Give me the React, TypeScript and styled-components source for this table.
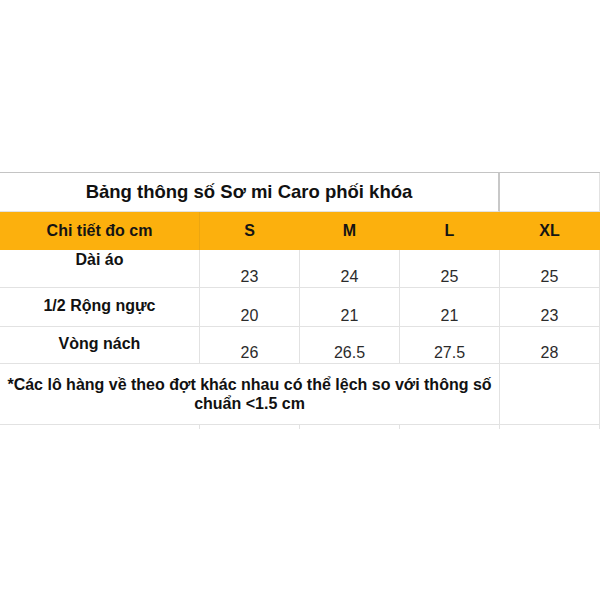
import styled, { createGlobalStyle } from "styled-components";

const GlobalStyle = createGlobalStyle`
  html, body {
    margin: 0;
    padding: 0;
    background: #ffffff;
  }
  body {
    font-family: "Liberation Sans", Arial, sans-serif;
  }
`;

const Page = styled.div`
  width: 601px;
  height: 601px;
  padding-top: 172px;
  box-sizing: border-box;
  overflow: hidden;
`;

const Sheet = styled.div`
  display: grid;
  grid-template-columns: 200px repeat(4, 100px);
  grid-template-rows: 39px 38px 38px 39px 37px 61px 4px;
  width: 600px;
  border-top: 1px solid #c4c4c4;
`;

const TitleCell = styled.div`
  grid-column: 1 / span 4;
  display: flex;
  align-items: center;
  justify-content: center;
  border-right: 2px solid #c8c8c8;
  border-bottom: 1px solid #e2e2e2;
  font-size: 18.5px;
  font-weight: 700;
  color: #111;
  box-sizing: border-box;
`;

const BlankCell = styled.div`
  border-right: 1px solid #e2e2e2;
  border-bottom: 1px solid #e2e2e2;
  box-sizing: border-box;
`;

const TitleSpacer = styled(BlankCell)`
  grid-column: 5;
`;

const HeadCell = styled.div<{ $split?: boolean }>`
  display: flex;
  align-items: center;
  justify-content: center;
  background: #fcb00d;
  border-right: 1px solid ${(p) => (p.$split ? "#eca610" : "#fcb00d")};
  box-sizing: border-box;
  font-size: 16px;
  font-weight: 700;
  color: #141414;
`;

const LabelCell = styled.div<{ $top: number }>`
  display: flex;
  justify-content: center;
  align-items: flex-start;
  padding-top: ${(p) => p.$top}px;
  border-right: 1px solid #e2e2e2;
  border-bottom: 1px solid #e2e2e2;
  box-sizing: border-box;
  font-size: 16px;
  line-height: 18px;
  font-weight: 700;
  color: #111;
`;

const ValueCell = styled.div`
  display: flex;
  justify-content: center;
  align-items: flex-end;
  padding-bottom: 1px;
  border-right: 1px solid #e2e2e2;
  border-bottom: 1px solid #e2e2e2;
  box-sizing: border-box;
  font-size: 16px;
  line-height: 18px;
  color: #2b2b2b;
`;

const NoteCell = styled.div`
  grid-column: 1 / span 4;
  display: flex;
  align-items: center;
  justify-content: center;
  text-align: center;
  padding: 0 3px;
  border-right: 1px solid #e2e2e2;
  border-bottom: 1px solid #e2e2e2;
  box-sizing: border-box;
  font-size: 16px;
  line-height: 19px;
  font-weight: 700;
  color: #111;
`;

const StubCell = styled.div`
  border-right: 1px solid #e2e2e2;
  box-sizing: border-box;
`;

const sizes = ["S", "M", "L", "XL"];

const rows = [
  { label: "Dài áo", top: 1, values: ["23", "24", "25", "25"] },
  { label: "1/2 Rộng ngực", top: 9, values: ["20", "21", "21", "23"] },
  { label: "Vòng nách", top: 8, values: ["26", "26.5", "27.5", "28"] },
];

export default function App() {
  return (
    <Page>
      <GlobalStyle />
      <Sheet>
        <TitleCell>Bảng thông số Sơ mi Caro phối khóa</TitleCell>
        <TitleSpacer />

        <HeadCell $split>Chi tiết đo cm</HeadCell>
        {sizes.map((s) => (
          <HeadCell key={s}>{s}</HeadCell>
        ))}

        {rows.map((row) => [
          <LabelCell key={row.label} $top={row.top}>
            {row.label}
          </LabelCell>,
          ...row.values.map((v, i) => (
            <ValueCell key={row.label + i}>{v}</ValueCell>
          )),
        ])}

        <NoteCell>
          *Các lô hàng về theo đợt khác nhau có thể lệch so với thông số chuẩn &lt;1.5 cm
        </NoteCell>
        <BlankCell />

        {[0, 1, 2, 3, 4].map((i) => (
          <StubCell key={i} />
        ))}
      </Sheet>
    </Page>
  );
}
